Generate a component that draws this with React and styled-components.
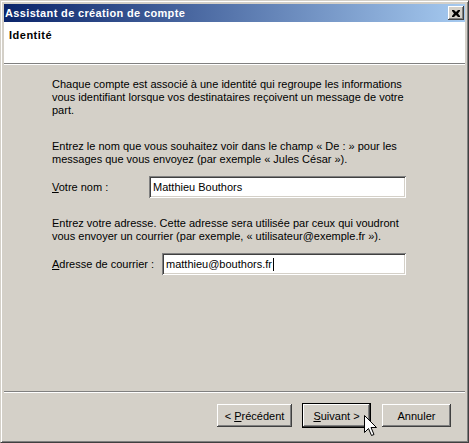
import React from 'react';
import styled, { createGlobalStyle, css } from 'styled-components';

const GlobalStyle = createGlobalStyle`
  html, body {
    margin: 0;
    padding: 0;
    background: #d4d0c8;
  }
  body {
    font-family: "Liberation Sans", Arial, sans-serif;
    font-size: 11px;
    color: #000;
  }
`;

const bevelOut = css`
  box-shadow:
    inset -1px -1px #404040,
    inset 1px 1px #ffffff,
    inset -2px -2px #808080,
    inset 2px 2px #d4d0c8;
`;

const Window = styled.div`
  position: relative;
  width: 469px;
  height: 443px;
  box-sizing: border-box;
  display: flex;
  flex-direction: column;
  background: #d4d0c8;
  border: 1px solid;
  border-color: #d4d0c8 #404040 #404040 #d4d0c8;
  box-shadow: inset 1px 1px #ffffff, inset -1px -1px #808080;
  padding: 3px;
`;

const TitleBar = styled.div`
  height: 18px;
  flex: none;
  display: flex;
  align-items: center;
  justify-content: space-between;
  padding: 0 1px 0 1px;
  background: linear-gradient(to right, #0a246a, #a6caf0);
  color: #fff;
  font-weight: bold;
  font-size: 11px;
  letter-spacing: 0.35px;
`;

const CloseButton = styled.div`
  width: 16px;
  height: 14px;
  display: flex;
  align-items: center;
  justify-content: center;
  background: #d4d0c8;
  ${bevelOut};
`;

const Header = styled.div`
  height: 41px;
  flex: none;
  box-sizing: border-box;
  padding: 7px 5px;
  background: #fff;
  font-weight: bold;
  letter-spacing: 0.5px;
  line-height: 13px;
`;

const Rule = styled.div`
  height: 0;
  flex: none;
  border-top: 1px solid #808080;
  border-bottom: 1px solid #ffffff;
`;

const Body = styled.div`
  flex: 1;
  display: flex;
  flex-direction: column;
  padding: 13px 59px 0 48px;
`;

const Section = styled.div`
  margin-top: ${p => p.$top || 0}px;
`;

const Para = styled.p`
  margin: 0;
  line-height: 13px;
`;

const Line = styled.span`
  display: block;
  white-space: nowrap;
`;

const FieldRow = styled.div`
  display: flex;
  align-items: center;
  margin-top: 10px;
`;

const Label = styled.div`
  width: ${p => p.$width}px;
  flex: none;
  white-space: nowrap;
`;

const TextBox = styled.div`
  flex: 1;
  height: 22px;
  box-sizing: border-box;
  display: flex;
  align-items: center;
  padding: 0 4px;
  background: #fff;
  box-shadow:
    inset 1px 1px #808080,
    inset -1px -1px #ffffff,
    inset 2px 2px #404040,
    inset -2px -2px #d4d0c8;
`;

const Caret = styled.span`
  display: inline-block;
  width: 1px;
  height: 13px;
  margin-left: 1px;
  background: #000;
`;

const Footer = styled.div`
  height: 46px;
  flex: none;
  box-sizing: border-box;
  display: flex;
  justify-content: flex-end;
  align-items: flex-start;
  padding: 11px 14px 0 0;
`;

const Button = styled.button`
  width: ${p => p.$width}px;
  height: 23px;
  margin-left: ${p => p.$gap || 0}px;
  padding: 0;
  border: none;
  background: #d4d0c8;
  font-family: inherit;
  font-size: 11px;
  color: #000;
  ${bevelOut};
  ${p => p.$default && css`
    box-shadow:
      0 0 0 1px #000,
      inset -1px -1px #404040,
      inset 1px 1px #ffffff,
      inset -2px -2px #808080,
      inset 2px 2px #d4d0c8;
  `}
`;

const Pointer = styled.svg`
  position: absolute;
  left: 363px;
  top: 414px;
`;

const intro = [
  'Chaque compte est associé à une identité qui regroupe les informations',
  'vous identifiant lorsque vos destinataires reçoivent un message de votre',
  'part.',
];

const nameHelp = [
  'Entrez le nom que vous souhaitez voir dans le champ « De : » pour les',
  'messages que vous envoyez (par exemple « Jules César »).',
];

const mailHelp = [
  'Entrez votre adresse. Cette adresse sera utilisée par ceux qui voudront',
  'vous envoyer un courrier (par exemple, « utilisateur@exemple.fr »).',
];

const Lines = ({ lines }) => (
  <Para>
    {lines.map((l, i) => <Line key={i}>{l}</Line>)}
  </Para>
);

const App = () => (
  <>
    <GlobalStyle />
    <Window>
      <TitleBar>
        <span>Assistant de création de compte</span>
        <CloseButton>
          <svg width="8" height="7" viewBox="0 0 8 7">
            <path d="M0 0h2l2 2 2-2h2v1L6 3.5 8 6v1H6L4 5 2 7H0V6l2-2.5L0 1z" fill="#000" />
          </svg>
        </CloseButton>
      </TitleBar>
      <Header>Identité</Header>
      <Rule />
      <Body>
        <Lines lines={intro} />
        <Section $top={23}>
          <Lines lines={nameHelp} />
          <FieldRow>
            <Label $width={97}><u>V</u>otre nom :</Label>
            <TextBox>Matthieu Bouthors</TextBox>
          </FieldRow>
        </Section>
        <Section $top={19}>
          <Lines lines={mailHelp} />
          <FieldRow>
            <Label $width={110}><u>A</u>dresse de courrier :</Label>
            <TextBox>matthieu@bouthors.fr<Caret /></TextBox>
          </FieldRow>
        </Section>
      </Body>
      <Rule />
      <Footer>
        <Button $width={75}>&lt; <u>P</u>récédent</Button>
        <Button $width={67} $gap={11} $default><u>S</u>uivant &gt;</Button>
        <Button $width={69} $gap={12}>Annuler</Button>
      </Footer>
      <Pointer width="13" height="22" viewBox="0 0 13 22">
        <path
          d="M0.5 0.5 L0.5 17.5 L4.5 13.5 L7.5 20.5 L10 19.5 L7 12.5 L12.5 12.5 Z"
          fill="#fff"
          stroke="#000"
          strokeWidth="1"
          strokeLinejoin="miter"
        />
      </Pointer>
    </Window>
  </>
);

export default App;
